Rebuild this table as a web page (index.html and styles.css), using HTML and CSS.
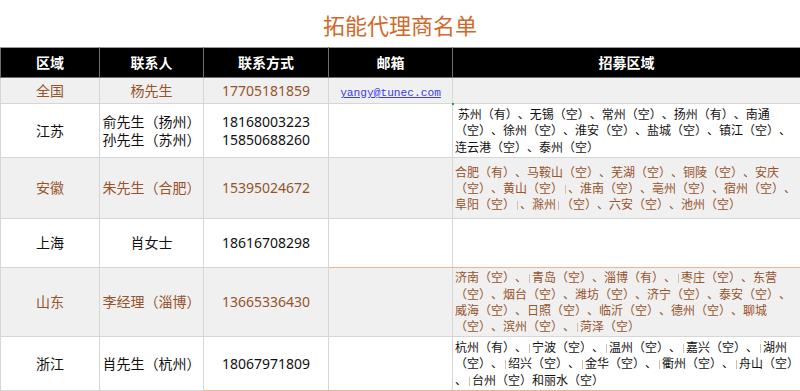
FILE: index.html
```html
<!DOCTYPE html>
<html lang="zh-CN">
<head>
<meta charset="utf-8">
<title>拓能代理商名单</title>
<link rel="stylesheet" href="styles.css">
</head>
<body>
<h1 class="title">拓能代理商名单</h1>
<table class="agents">
  <colgroup>
    <col class="c-region"><col class="c-person"><col class="c-phone"><col class="c-mail"><col class="c-area">
  </colgroup>
  <thead>
    <tr class="head">
      <th>区域</th><th>联系人</th><th>联系方式</th><th>邮箱</th><th>招募区域</th>
    </tr>
  </thead>
  <tbody>
    <tr class="r1 alt">
      <td>全国</td><td>杨先生</td><td>17705181859</td>
      <td class="mail"><a href="#">yangy@tunec.com</a></td><td class="area"></td>
    </tr>
    <tr class="r2">
      <td>江苏</td><td>俞先生（扬州）<br>孙先生（苏州）</td><td>18168003223<br>15850688260</td>
      <td></td>
      <td class="area mark">&nbsp;苏州（有）、无锡（空）、常州（空）、扬州（有）、南通<br>（空）、徐州（空）、淮安（空）、盐城（空）、镇江（空）、<br>连云港（空）、泰州（空）</td>
    </tr>
    <tr class="r3 alt">
      <td>安徽</td><td>朱先生（合肥）</td><td>15395024672</td>
      <td></td>
      <td class="area">合肥（有）、马鞍山（空）、芜湖（空）、铜陵（空）、安庆<br>（空）、黄山（空）<span class="cur"></span>、淮南（空）、亳州（空）、宿州（空）、<br>阜阳（空）<span class="cur"></span>、滁州<span class="cur"></span>（空）、六安（空）、池州（空）</td>
    </tr>
    <tr class="r4">
      <td>上海</td><td>肖女士</td><td>18616708298</td>
      <td class="ob"></td><td class="area ob"></td>
    </tr>
    <tr class="r5 alt">
      <td>山东</td><td>李经理（淄博）</td><td>13665336430</td>
      <td class="ot"></td>
      <td class="area ot">济南（空）、<span class="cur"></span>青岛（空）、淄博（有）、<span class="cur"></span>枣庄（空）、东营<br>（空）、烟台（空）、潍坊（空）、济宁（空）、泰安（空）、<br>威海（空）、日照（空）、临沂（空）、德州（空）、聊城<br>（空）、滨州（空）、<span class="cur"></span>菏泽（空）</td>
    </tr>
    <tr class="r6">
      <td>浙江</td><td>肖先生（杭州）</td><td class="ob">18067971809</td>
      <td class="ob"></td>
      <td class="area ob">杭州（有）、<span class="cur"></span>宁波（空）、<span class="cur"></span>温州（空）、<span class="cur"></span>嘉兴（空）、<span class="cur"></span>湖州<br>（空）、<span class="cur"></span>绍兴（空）、<span class="cur"></span>金华（空）、<span class="cur"></span>衢州（空）、<span class="cur"></span>舟山（空）<br>、<span class="cur"></span>台州（空）和丽水（空）</td>
    </tr>
  </tbody>
</table>
</body>
</html>
```

FILE: styles.css
```css
html, body {
  margin: 0;
  padding: 0;
  background: #ffffff;
}

body {
  width: 800px;
  font-family: "Noto Sans", "Noto Sans CJK SC", sans-serif;
  color: #111111;
  text-spacing-trim: space-all;
}

.title {
  margin: 0;
  height: 47px;
  display: flex;
  align-items: center;
  justify-content: center;
  font-size: 22px;
  font-weight: 400;
  color: #d0692a;
  letter-spacing: 0;
}

.agents {
  width: 800px;
  border-collapse: collapse;
  table-layout: fixed;
  font-size: 14px;
}

.c-region { width: 99px; }
.c-person { width: 104px; }
.c-phone { width: 125px; }
.c-mail { width: 124px; }
.c-area { width: 348px; }

.agents th,
.agents td {
  border: 1px solid #d6d6d6;
  padding: 0;
  text-align: center;
  vertical-align: middle;
  line-height: 18px;
}

.head {
  height: 30px;
  background: #000000;
}

.agents th {
  color: #ffffff;
  font-weight: 700;
  font-size: 14px;
  border-color: #6e6e6e;
  border-top-color: #9a9a9a;
}

.r1 { height: 26px; }
.r2 { height: 54px; }
.r3 { height: 61px; }
.r4 { height: 49px; }
.r5 { height: 69px; }
.r6 { height: 54px; }

.alt {
  background: #f0f0f0;
}

.alt td {
  color: #97532a;
}

.mail {
  vertical-align: bottom !important;
  padding-bottom: 3px !important;
}

.mail a {
  font-family: "Liberation Mono", monospace;
  font-size: 11.2px;
  color: #3a3aee;
  text-decoration: underline;
  line-height: 13px;
}

.agents td.area {
  text-align: left;
  font-size: 12px;
  line-height: 16.3px;
  padding: 0 0 0 2px;
  white-space: nowrap;
  font-family: "Noto Sans CJK SC", sans-serif;
  text-spacing-trim: space-all;
}

.mark {
  position: relative;
}

.mark::before {
  content: "";
  position: absolute;
  left: -1px;
  top: -1px;
  width: 2px;
  height: 2px;
  background: #3aa13a;
}

.cur {
  display: inline-block;
  width: 1px;
  height: 9px;
  margin: 0 2px;
  background: #cdbfb2;
  vertical-align: -1px;
}

.agents td.ob {
  border-bottom-color: #f2b48a;
}

.agents td.ot {
  border-top-color: #f2b48a;
}
```
